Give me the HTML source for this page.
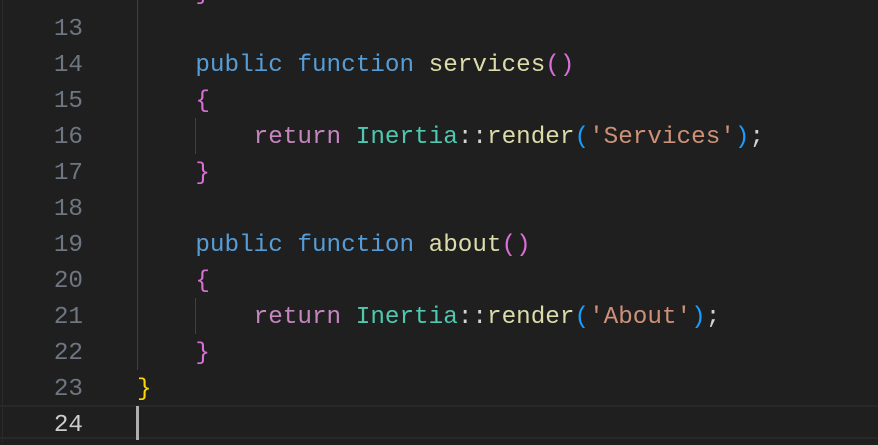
<!DOCTYPE html><html><head><style>
body{margin:0;width:878px;height:442px;overflow:hidden;background:#1f1f1f;font-family:"Liberation Mono",monospace;font-size:24.3px;position:relative}
.l{position:absolute;left:0;height:36px;line-height:36px;white-space:pre;width:878px}
.n{position:absolute;right:795px;color:#6e7681;text-align:right}
.c{position:absolute;left:137px;color:#ccc}
.k{color:#569cd6}.f{color:#dcdcaa}.p{color:#da70d6}.r{color:#c586c0}.t{color:#4ec9b0}.s{color:#ce9178}.b{color:#179fff}.y{color:#ffd700}.w{color:#d4d4d4}
.g{position:absolute;width:1px;background:#404040}
</style></head><body>
<div style="position:absolute;left:2px;top:0;width:1px;height:442px;background:#2b2b2b"></div>
<div style="position:absolute;left:0;top:405px;width:878px;height:34px;border-top:2px solid #282828;border-bottom:2px solid #282828;box-sizing:border-box"></div>
<div class="g" style="left:137px;top:0;height:370px"></div>
<div class="g" style="left:195px;top:118px;height:36px"></div>
<div class="g" style="left:195px;top:298px;height:36px"></div>
<div style="position:absolute;left:136px;top:406px;width:3px;height:34px;background:#aeafad"></div>
<div style="position:absolute;left:0;top:3px;width:878px;height:442px">
<div class="l" style="top:-27px"><span class="c">    <span class="p">}</span></span></div>
<div class="l" style="top:9px"><span class="n">13</span></div>
<div class="l" style="top:45px"><span class="n">14</span><span class="c">    <span class="k">public function</span> <span class="f">services</span><span class="p">()</span></span></div>
<div class="l" style="top:81px"><span class="n">15</span><span class="c">    <span class="p">{</span></span></div>
<div class="l" style="top:117px"><span class="n">16</span><span class="c">        <span class="r">return</span> <span class="t">Inertia</span><span class="w">::</span><span class="f">render</span><span class="b">(</span><span class="s">'Services'</span><span class="b">)</span><span class="w">;</span></span></div>
<div class="l" style="top:153px"><span class="n">17</span><span class="c">    <span class="p">}</span></span></div>
<div class="l" style="top:189px"><span class="n">18</span></div>
<div class="l" style="top:225px"><span class="n">19</span><span class="c">    <span class="k">public function</span> <span class="f">about</span><span class="p">()</span></span></div>
<div class="l" style="top:261px"><span class="n">20</span><span class="c">    <span class="p">{</span></span></div>
<div class="l" style="top:297px"><span class="n">21</span><span class="c">        <span class="r">return</span> <span class="t">Inertia</span><span class="w">::</span><span class="f">render</span><span class="b">(</span><span class="s">'About'</span><span class="b">)</span><span class="w">;</span></span></div>
<div class="l" style="top:333px"><span class="n">22</span><span class="c">    <span class="p">}</span></span></div>
<div class="l" style="top:369px"><span class="n">23</span><span class="c"><span class="y">}</span></span></div>
<div class="l" style="top:405px"><span class="n" style="color:#ccc">24</span></div>
</div>
</body></html>
